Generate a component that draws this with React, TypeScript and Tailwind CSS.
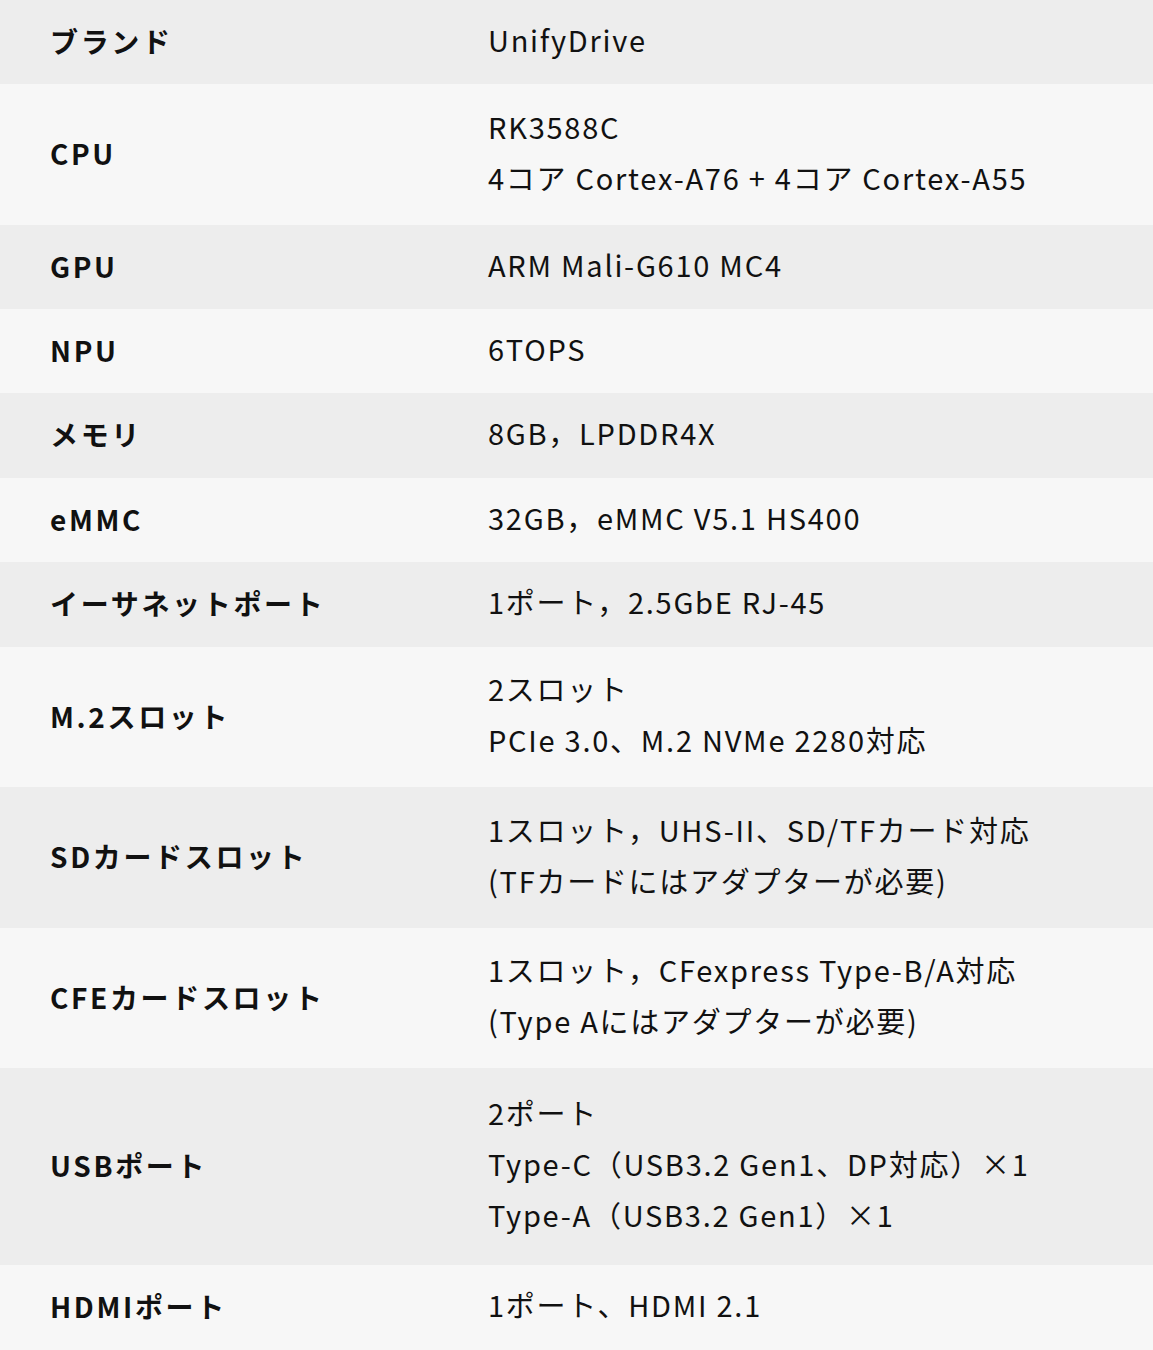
const rows: { label: string; lines: string[]; h: string; dark: boolean }[] = [
  { label: "ブランド", lines: ["UnifyDrive"], h: "h-[84px]", dark: true },
  { label: "CPU", lines: ["RK3588C", "4コア Cortex-A76 + 4コア Cortex-A55"], h: "h-[141px]", dark: false },
  { label: "GPU", lines: ["ARM Mali-G610 MC4"], h: "h-[84px]", dark: true },
  { label: "NPU", lines: ["6TOPS"], h: "h-[84px]", dark: false },
  { label: "メモリ", lines: ["8GB，LPDDR4X"], h: "h-[85px]", dark: true },
  { label: "eMMC", lines: ["32GB，eMMC V5.1 HS400"], h: "h-[84px]", dark: false },
  { label: "イーサネットポート", lines: ["1ポート，2.5GbE RJ-45"], h: "h-[85px]", dark: true },
  { label: "M.2スロット", lines: ["2スロット", "PCIe 3.0、M.2 NVMe 2280対応"], h: "h-[140px]", dark: false },
  { label: "SDカードスロット", lines: ["1スロット，UHS-II、SD/TFカード対応", "(TFカードにはアダプターが必要)"], h: "h-[141px]", dark: true },
  { label: "CFEカードスロット", lines: ["1スロット，CFexpress Type-B/A対応", "(Type Aにはアダプターが必要)"], h: "h-[140px]", dark: false },
  { label: "USBポート", lines: ["2ポート", "Type-C（USB3.2 Gen1、DP対応）×1", "Type-A（USB3.2 Gen1）×1"], h: "h-[197px]", dark: true },
  { label: "HDMIポート", lines: ["1ポート、HDMI 2.1"], h: "h-[85px]", dark: false },
];

export default function App() {
  return (
    <div className="w-[1153px] font-['Noto_Sans_CJK_JP','Noto_Sans',sans-serif] text-[#111]">
      {rows.map((row) => (
        <div
          key={row.label}
          className={`flex items-center ${row.h} ${row.dark ? "bg-[#ededed]" : "bg-[#f7f7f7]"}`}
        >
          <div className="w-[488px] shrink-0 pl-[50px] text-[28px] leading-[51px] font-bold tracking-[0.095em] -mt-[2px]">
            {row.label}
          </div>
          <div className="text-[29px] leading-[51px] tracking-[0.06em] -mt-[6px]">
            {row.lines.map((line) => (
              <div key={line}>{line}</div>
            ))}
          </div>
        </div>
      ))}
    </div>
  );
}
